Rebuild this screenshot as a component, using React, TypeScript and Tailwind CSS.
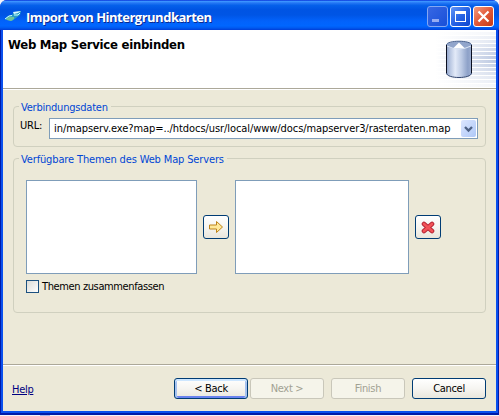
import type { ReactNode } from "react";

const buttonBase = "flex items-center justify-center rounded-[3px] border";
const activeButton = "border-[#003c74] bg-linear-to-b from-white via-[#f6f5f1] to-[#e9e6dc]";
const disabledButton = "border-[#c9c7ba] bg-[#f5f4ea] text-[#a1a192]";
const text = "whitespace-nowrap text-[11px] leading-[13px]";

function Legend({ children }: { children: ReactNode }) {
  return <legend className={`${text} ml-[5px] h-[13px] pl-[2px] pr-[3px] pt-px text-[#0046d5]`}>{children}</legend>;
}

function TitleBar() {
  return (
    <header className="flex h-[30px] shrink-0 items-start rounded-t-[7px] bg-[linear-gradient(180deg,#0831d9_0%,#3a93ff_5%,#2476f4_10%,#0560ea_18%,#0054e3_32%,#0055e5_50%,#0262fb_70%,#0066ff_86%,#005af0_93%,#003dd7_100%)] pl-[4px] pr-[5px]">
      <svg className="mt-[8px] h-[16px] w-[18px] shrink-0" viewBox="0 0 18 16">
        <path d="M1 11L4 8L8 7L10 4L17 3L16 7L12 10L8 13L3 12Z" fill="#2a9cc4" />
        <path d="M9 4L17 3L14 5L10 6Z" fill="#d9f7ff" />
        <path d="M2 11L5 9L10 9L10 11L7 13L3 12Z" fill="#6fc29a" />
        <path d="M1 11L5 8L8 7.5M10 7L14 7L16 5" stroke="#c9ffff" strokeWidth="1" fill="none" />
      </svg>
      <h1 className="ml-[4px] mt-[8px] whitespace-nowrap font-['Open_Sans',sans-serif] text-[13px] font-bold leading-[18px] tracking-[-0.5px] text-white [text-shadow:1px_1px_0_#0b2a91]">Import von Hintergrundkarten</h1>
      <div className="ml-auto mt-[6px] flex gap-[2px]">
        <div className="h-[21px] w-[21px] rounded-[3px] border border-[#84a7f3] bg-linear-to-br from-[#3767e4] to-[#174fd8]">
          <svg viewBox="0 0 19 19"><path d="M4 12H11V15H4Z" fill="#96acf2" /></svg>
        </div>
        <div className="h-[21px] w-[21px] rounded-[3px] border border-white bg-linear-to-br from-[#6395f5] via-[#2763e5] to-[#0c45cf]">
          <svg viewBox="0 0 19 19" shapeRendering="crispEdges"><path d="M4 4H15V15H4Z M5 7V14H14V7Z" fill="white" fillRule="evenodd" /></svg>
        </div>
        <div className="h-[21px] w-[21px] rounded-[3px] border border-white bg-linear-to-br from-[#f09a7f] via-[#e25838] to-[#c63a12]">
          <svg viewBox="0 0 19 19"><path d="M4.5 4.5L14.5 14.5M14.5 4.5L4.5 14.5" stroke="white" strokeWidth="2.2" /></svg>
        </div>
      </div>
    </header>
  );
}

function Banner() {
  return (
    <section className="flex h-[60px] shrink-0 justify-between border-b border-white bg-white">
      <div className="flex h-[59px] flex-1 justify-between border-b border-[#aca899]">
        <h2 className="ml-[5px] mt-[7px] whitespace-nowrap text-[13px] font-bold leading-[16px] tracking-[-0.25px]">Web Map Service einbinden</h2>
        <svg className="h-[58px] w-[75px] shrink-0" viewBox="0 0 75 58">
          <defs>
            <linearGradient id="fade"><stop offset=".1" stopColor="#fff" /><stop offset="1" stopColor="#b9c6e0" /></linearGradient>
            <linearGradient id="body"><stop stopColor="#8fa3ca" /><stop offset=".15" stopColor="#b9c7e2" /><stop offset=".35" stopColor="#e3eaf8" /><stop offset=".6" stopColor="#bccae4" /><stop offset=".85" stopColor="#8da1c8" /><stop offset="1" stopColor="#9eafd1" /></linearGradient>
          </defs>
          {Array.from({ length: 14 }, (_, i) => (
            <rect key={i} x="8" y={2 + i * 4} width="67" height="3" fill="url(#fade)" opacity={Math.max(0.12, 1 - Math.abs(i - 6.5) * 0.13)} />
          ))}
          <path d="M25.5 15C25.5 10 50.5 10 50.5 15V43C50.5 49 25.5 49 25.5 43Z" fill="url(#body)" />
          <path d="M25.5 15V43M50.5 15V43" stroke="#0a0f20" />
          <path d="M25.5 43C25.5 49 50.5 49 50.5 43" fill="none" stroke="#33466f" />
          <ellipse cx="38" cy="15.3" rx="12" ry="3.7" fill="#91a5cb" />
          <path d="M25.5 15C25.5 10 50.5 10 50.5 15" fill="none" stroke="#4c648f" />
          <path d="M38 12.5L32 18.5H44Z" fill="white" />
          <path d="M26 16Q38 22 50 16" fill="none" stroke="#dce6f5" />
        </svg>
      </div>
    </section>
  );
}

export default function App() {
  return (
    <div className="h-[416px] w-[499px] overflow-hidden bg-[#f3f5fb] font-['DejaVu_Sans_Condensed','DejaVu_Sans',sans-serif] text-black">
      <div className="flex h-[415px] flex-col rounded-t-[7px] bg-[#0831d9]">
        <TitleBar />
        <div className="h-[385px] border-x border-b-2 border-[#001ba8]">
          <main className="flex h-[383px] flex-col border-x-2 border-b-2 border-[#0a50ee] bg-[#ece9d8]">
            <Banner />
            <div className="h-[274px] shrink-0 px-[10px] pt-[10px]">
              <fieldset className="h-[47px] rounded-[4px] border border-[#d0d0bf]">
                <Legend><span className="tracking-[-0.22px]">Verbindungsdaten</span></Legend>
                <div className="flex pl-[6px]">
                  <label className={`${text} mt-[6px] w-[29px] tracking-[-0.2px]`}>URL:</label>
                  <div className="mt-[5px] flex h-[21px] w-[429px] items-center border border-[#7f9db9] bg-white pl-[4px] pr-px">
                    <span className={`${text} tracking-[-0.073px]`}>in/mapserv.exe?map=../htdocs/usr/local/www/docs/mapserver3/rasterdaten.map</span>
                    <span className="ml-auto flex h-[17px] w-[15px] shrink-0 items-center justify-center rounded-[2px] bg-linear-to-br from-[#dce6ff] to-[#aec8f7]">
                      <svg className="h-[8px] w-[9px]" viewBox="0 0 9 8"><path d="M1 2L4.5 5.5L8 2" fill="none" stroke="#4d6185" strokeWidth="2.3" /></svg>
                    </span>
                  </div>
                </div>
              </fieldset>
              <fieldset className="mt-[5px] h-[161px] rounded-[4px] border border-[#d0d0bf]">
                <Legend><span className="tracking-[-0.14px]">Verfügbare Themen des Web Map Servers</span></Legend>
                <div className="mt-[15px] flex items-center pl-[12px]">
                  <div className="h-[94px] w-[171px] border border-[#7f9db9] bg-white" />
                  <button className={`${buttonBase} ${activeButton} mx-[6px] h-[24px] w-[26px]`}>
                    <svg className="h-[14px] w-[16px]" viewBox="0 0 16 14"><path d="M1.5 5H8.5V1.5L14.5 7L8.5 12.5V9H1.5Z" fill="#ffe99b" stroke="#bd831a" /></svg>
                  </button>
                  <div className="h-[94px] w-[174px] border border-[#7f9db9] bg-white" />
                  <button className={`${buttonBase} ${activeButton} ml-[6px] h-[24px] w-[26px]`}>
                    <svg className="h-[13px] w-[14px]" viewBox="0 0 14 13"><path d="M3 3L11 10M11 3L3 10" stroke="#b52535" strokeWidth="4.6" strokeLinecap="round" /><path d="M3 3L11 10M11 3L3 10" stroke="#f25358" strokeWidth="2.7" strokeLinecap="round" /></svg>
                  </button>
                </div>
                <label className="mt-[6px] flex h-[13px] items-center gap-[3px] pl-[12px]">
                  <span className="h-[13px] w-[13px] border border-[#1c5180] bg-linear-to-br from-[#dcdcd7] to-white" />
                  <span className={`${text} tracking-[-0.38px]`}>Themen zusammenfassen</span>
                </label>
              </fieldset>
            </div>
            <footer className="border-t border-[#aca899]">
              <div className="flex border-t border-white pl-[9px] pt-[12px] tracking-[-0.3px]">
                <a className={`${text} mt-[5px] w-[162px] text-[#000080] underline`}>Help</a>
                <button className={`${buttonBase} ${activeButton} ${text} h-[21px] w-[74px] shadow-[inset_0_2px_0_#cee7ff,inset_2px_0_0_#a6c2ef,inset_-2px_0_0_#a6c2ef,inset_0_-2px_0_#6982ee]`}>&lt; Back</button>
                <button className={`${buttonBase} ${disabledButton} ${text} ml-[2px] h-[21px] w-[74px]`}>Next &gt;</button>
                <button className={`${buttonBase} ${disabledButton} ${text} ml-[7px] h-[21px] w-[74px]`}>Finish</button>
                <button className={`${buttonBase} ${activeButton} ${text} ml-[7px] h-[21px] w-[74px]`}>Cancel</button>
              </div>
            </footer>
          </main>
        </div>
        <div className="h-px" />
      </div>
      <div className="flex h-px pl-[40px]"><span className="h-px w-[10px] bg-[#a9b9ec]" /></div>
    </div>
  );
}
